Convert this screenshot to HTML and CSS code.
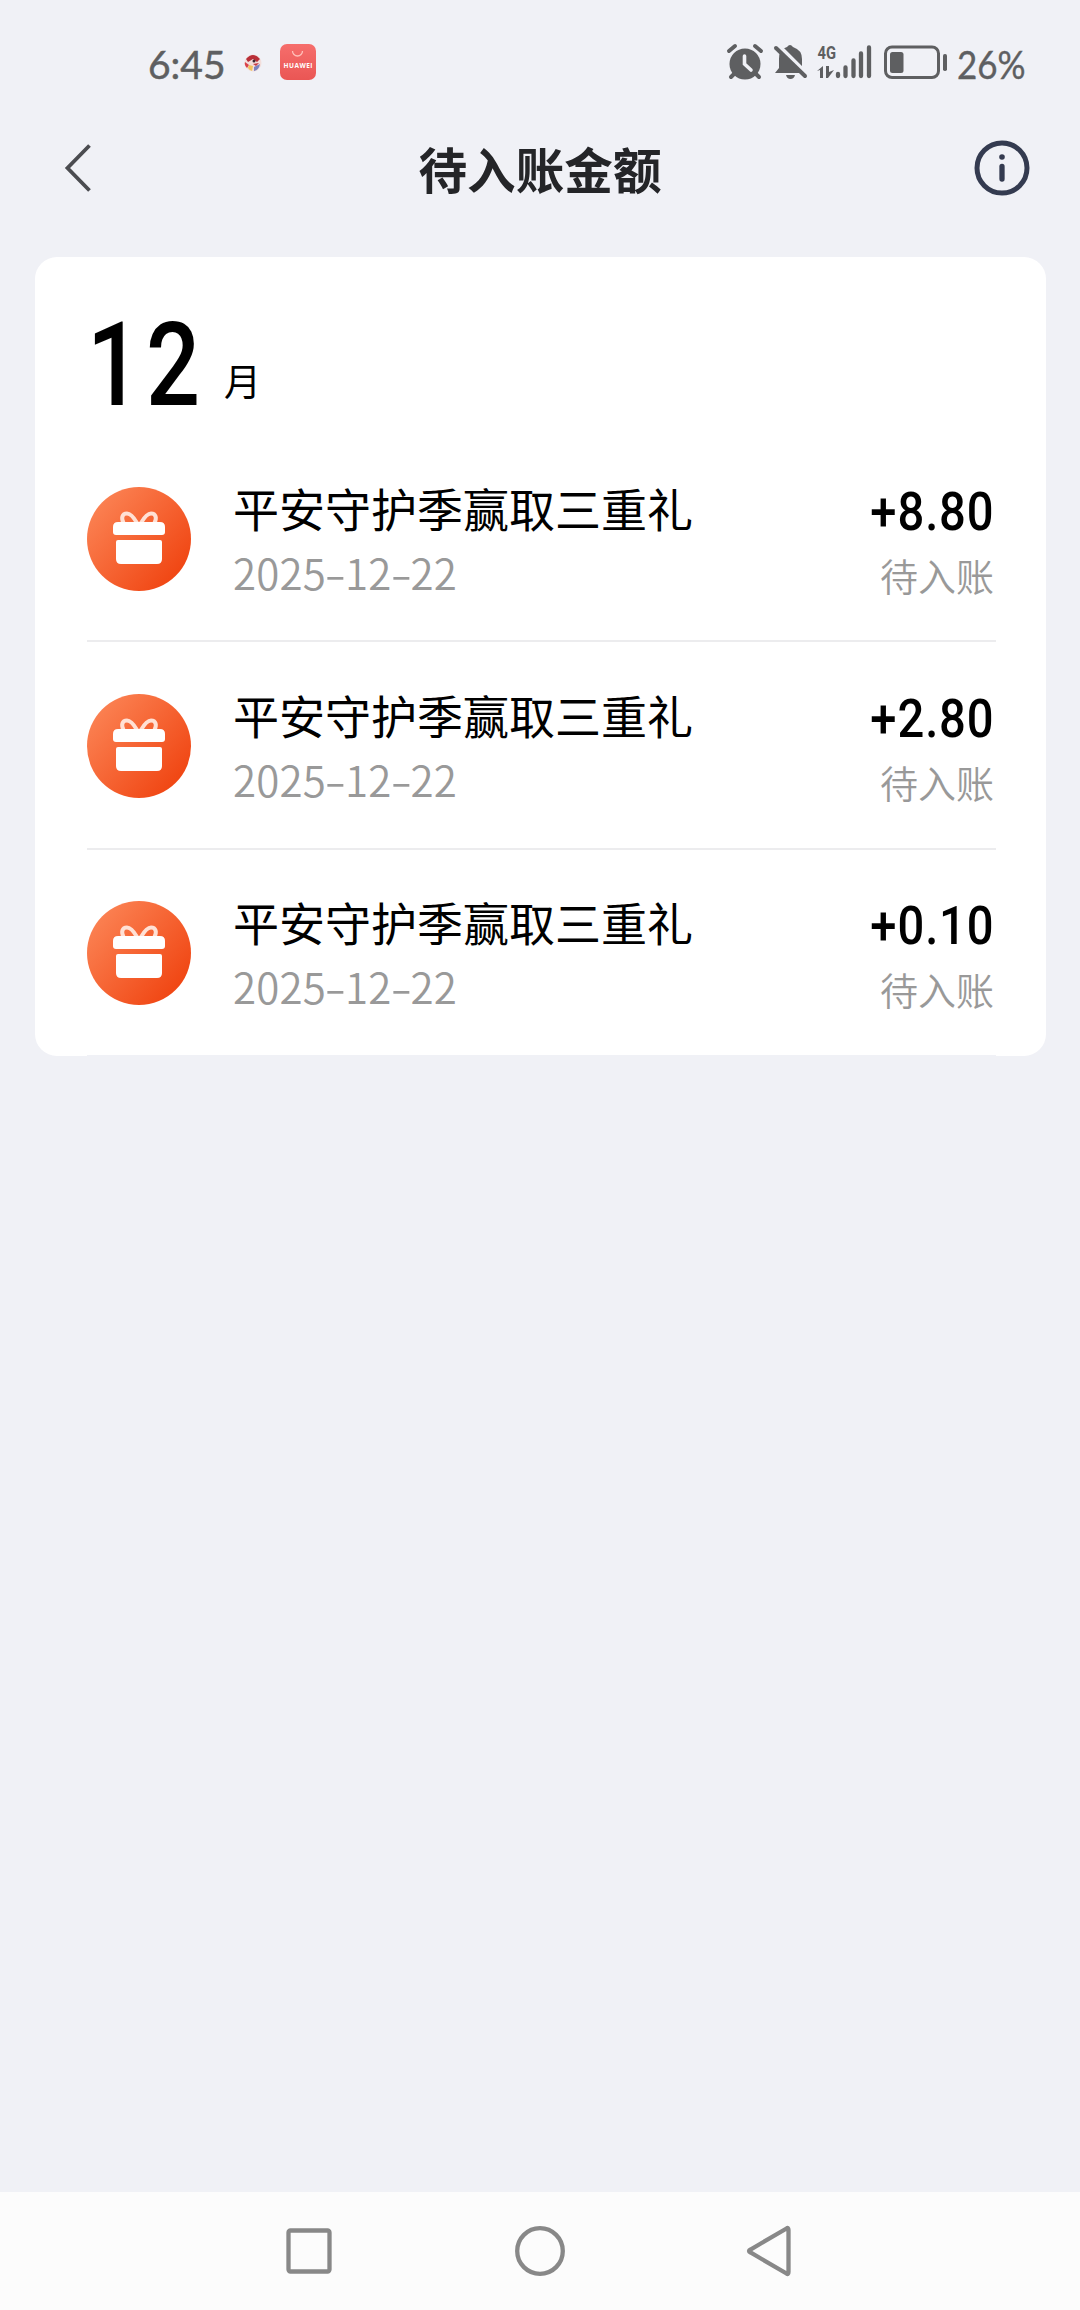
FILE: index.html
```html
<!DOCTYPE html>
<html lang="zh-CN">
<head>
<meta charset="utf-8">
<title>待入账金额</title>
<link rel="stylesheet" href="styles.css">
</head>
<body>
<svg width="0" height="0" class="defs">
  <defs>
    <linearGradient id="orange" x1="0.1" y1="0.15" x2="0.9" y2="0.85">
      <stop offset="0" stop-color="#fb8152"/>
      <stop offset="1" stop-color="#f04512"/>
    </linearGradient>
    <linearGradient id="store" x1="0" y1="0" x2="0" y2="1">
      <stop offset="0" stop-color="#f66e6c"/>
      <stop offset="1" stop-color="#ea5654"/>
    </linearGradient>
    <symbol id="gift" viewBox="0 0 104 104">
      <circle cx="52" cy="52" r="52" fill="url(#orange)"/>
      <path d="M50 36C46 29 43 26.500 40 26.500C35 26.500 34 31 36.500 36M54 36C58 29 61 26.500 64 26.500C69 26.500 70 31 67.500 36" fill="none" stroke="#ffe1d5" stroke-width="4"/>
      <path d="M31 35H73Q78 35 78 40V45Q78 48 75 48H29Q26 48 26 45V40Q26 35 31 35Z" fill="#fff"/>
      <path d="M31 53H73Q75 53 75 55V72Q75 77 70 77H34Q29 77 29 72V55Q29 53 31 53Z" fill="#fff"/>
    </symbol>
  </defs>
</svg>
<div class="screen">
  <div class="status">
    <span class="time">6:45</span>
    <svg class="mini" viewBox="0 0 18 18"><circle cx="9" cy="9" r="8.500" fill="#f2dedb"/><path d="M2 5Q9-3 16 5L13 8L9 5L4 8Z" fill="#b92f38"/><path d="M1 8L5 11L3 14Q0 11 1 8Z" fill="#d9434b"/><circle cx="10" cy="7" r="1.500" fill="#3d2631"/><path d="M5 11L9 12L8 17Q5 16 4 14Z" fill="#f1c35d"/><path d="M10 13L16 10Q15 16 10 17Z" fill="#7b83c0"/><path d="M9 10L15 9L12 12Z" fill="#c53843"/></svg>
    <svg class="store" viewBox="0 0 36 36"><rect width="36" height="36" rx="7" fill="url(#store)"/><path d="M12.500 7A5 5 0 0 0 22.500 7" fill="none" stroke="#ffc0ba" stroke-width="1.300"/><text x="18" y="23.500" text-anchor="middle" textLength="29" class="brand">HUAWEI</text></svg>
    <svg class="signals" viewBox="0 0 240 40" fill="#5e5f61">
      <circle cx="18" cy="20" r="15.500"/>
      <path d="M2 7L8 2M34 7L28 2M7 30L4 33M29 30L32 33" fill="none" stroke="#5e5f61" stroke-width="4" stroke-linecap="round"/>
      <path d="M17.500 12V20L24 26" fill="none" stroke="#f0f1f6" stroke-width="3.600" stroke-linecap="round"/>
      <path d="M48 29L52 24V15Q52 5 60 3Q63-1 66 3Q75 6 75 15V24L78 29ZM59 31H68Q67 35 63.500 35T59 31Z"/>
      <path d="M51 1L81 31" stroke="#f0f1f6" stroke-width="4"/>
      <path d="M49 4L78 32" stroke="#5e5f61" stroke-width="4" stroke-linecap="round"/>
      <text x="90.500" y="15" textLength="18.500" lengthAdjust="spacingAndGlyphs" class="network">4G</text>
      <path d="M90 27L96 22V34H93V26ZM99 22H102V28L107 26L101 34H99Z"/>
      <path d="M111 30V32M118.500 23.500V32M126.500 16.500V32M134 9.500V32M142 3.500V32" stroke="#5e5f61" stroke-width="4.300" stroke-linecap="round"/>
      <rect x="158.500" y="3" width="53" height="30.500" rx="6.500" fill="none" stroke="#5e5f61" stroke-width="3"/>
      <rect x="163" y="8" width="13.500" height="21" rx="2.500"/>
      <rect x="216" y="10" width="4" height="17" rx="1.800"/>
    </svg>
    <span class="percent">26%</span>
  </div>
  <header class="header">
    <svg class="back" viewBox="0 0 28 50"><path d="M25.500 2.500L3.500 25L25.500 47.500" fill="none" stroke="#4b4c50" stroke-width="3.800"/></svg>
    <h1 class="title">待入账金额</h1>
    <svg class="info" viewBox="0 0 56 56"><circle cx="28" cy="28" r="25" fill="none" stroke="#343b50" stroke-width="5"/><circle cx="28" cy="17" r="2.800" fill="#343b50"/><path d="M28 26.500V39" stroke="#343b50" stroke-width="5.300" stroke-linecap="round"/></svg>
  </header>
  <main class="card">
    <div class="month"><span class="month-number">12</span><span class="month-unit">月</span></div>
    <div class="item">
      <svg class="gift"><use href="#gift"/></svg>
      <div class="detail"><div class="name">平安守护季赢取三重礼</div><div class="date">2025<i>-</i>12<i>-</i>22</div></div>
      <div class="value"><div class="amount">+8.80</div><div class="state">待入账</div></div>
    </div>
    <div class="item">
      <svg class="gift"><use href="#gift"/></svg>
      <div class="detail"><div class="name">平安守护季赢取三重礼</div><div class="date">2025<i>-</i>12<i>-</i>22</div></div>
      <div class="value"><div class="amount">+2.80</div><div class="state">待入账</div></div>
    </div>
    <div class="item">
      <svg class="gift"><use href="#gift"/></svg>
      <div class="detail"><div class="name">平安守护季赢取三重礼</div><div class="date">2025<i>-</i>12<i>-</i>22</div></div>
      <div class="value"><div class="amount">+0.10</div><div class="state">待入账</div></div>
    </div>
  </main>
  <nav class="nav">
    <svg viewBox="0 0 52 52"><rect x="5.500" y="5.500" width="41" height="41" rx="2" /></svg>
    <svg viewBox="0 0 52 52"><circle cx="27" cy="26" r="22.800"/></svg>
    <svg viewBox="0 0 52 52"><path d="M44.500 3.500Q46.500 2 46.500 5V47Q46.500 50 44.500 48.500L8.500 27.500Q5.500 26 8.500 24.500Z"/></svg>
  </nav>
</div>
</body>
</html>
```

FILE: styles.css
```css
* { box-sizing: border-box; }
body { margin: 0; background: #f0f1f6; font-family: "Noto Sans CJK SC", sans-serif; }
.defs { display: block; height: 0; }
.screen { width: 1080px; height: 2310px; display: flex; flex-direction: column; overflow: hidden; }
.status { height: 124px; display: flex; align-items: center; padding-left: 148px; flex: none; color: #5e5f61; font-family: Lato, sans-serif; }
.time { width: 96px; font-size: 39px; line-height: 50px; font-weight: 400; -webkit-text-stroke: 0.5px #5e5f61; margin-top: 4px; }
.mini { width: 18px; height: 18px; margin-top: 2px; }
.store { width: 36px; height: 36px; margin-left: 18px; }
.brand { font: 700 6.5px "Open Sans", sans-serif; fill: #fff; }
.signals { width: 240px; height: 40px; margin: 4px 0 0 411px; flex: none; overflow: visible; }
.network { font: 700 18px Roboto, sans-serif; }
.percent { font-size: 38px; line-height: 50px; margin: 4px 0 0 -10px; -webkit-text-stroke: 0.4px #5e5f61; transform: scaleX(.92); transform-origin: left; }
.header { height: 90px; flex: none; display: flex; justify-content: space-between; align-items: center; padding: 0 50px 2px 64px; }
.back { width: 28px; height: 50px; }
.title { margin: 0 0 0 14px; font-size: 48.6px; line-height: 70px; font-weight: 700; color: #242528; }
.info { width: 56px; height: 56px; }
.card { width: 1011px; height: 799px; flex: none; margin: 43px 0 0 35px; padding: 0 50px 0 52px; background: #fff; border-radius: 22px; }
.month { height: 178px; padding-top: 19px; display: flex; align-items: baseline; color: #000; }
.month-number { width: 137px; font: 500 116px/178px Roboto, sans-serif; letter-spacing: 6px; transform: scaleX(.82); transform-origin: left; }
.month-unit { font-size: 37px; line-height: 50px; transform: translateY(-9px); }
.item { height: 207.4px; display: flex; align-items: center; padding-top: 2px; border-bottom: 2px solid #ececee; }
.item:last-child { border-color: #f0f1f6; }
.gift { width: 104px; height: 104px; flex: none; }
.detail { margin-left: 42px; padding-top: 2px; flex: 1; }
.name { font-size: 46px; line-height: 64px; color: #000; white-space: nowrap; }
.date { font-size: 42px; line-height: 66px; font-weight: 350; letter-spacing: 0.2px; color: #999; }
.date i { display: inline-block; width: 19px; text-align: center; font-style: normal; transform: scaleX(1.5); }
.value { text-align: right; padding: 4px 2px 0 0; }
.amount { font: 500 53px/68px Roboto, sans-serif; letter-spacing: 1px; margin-right: -1px; color: #000; transform: translateY(2px) scaleX(.89); transform-origin: right; }
.state { font-size: 38px; line-height: 62px; font-weight: 350; color: #999; }
.nav { height: 118px; flex: none; margin-top: auto; display: flex; gap: 177.5px; padding: 33px 0 0 283px; background: #fcfcfc; }
.nav svg { width: 52px; height: 52px; fill: none; stroke: #888; stroke-width: 4.3px; }
```
